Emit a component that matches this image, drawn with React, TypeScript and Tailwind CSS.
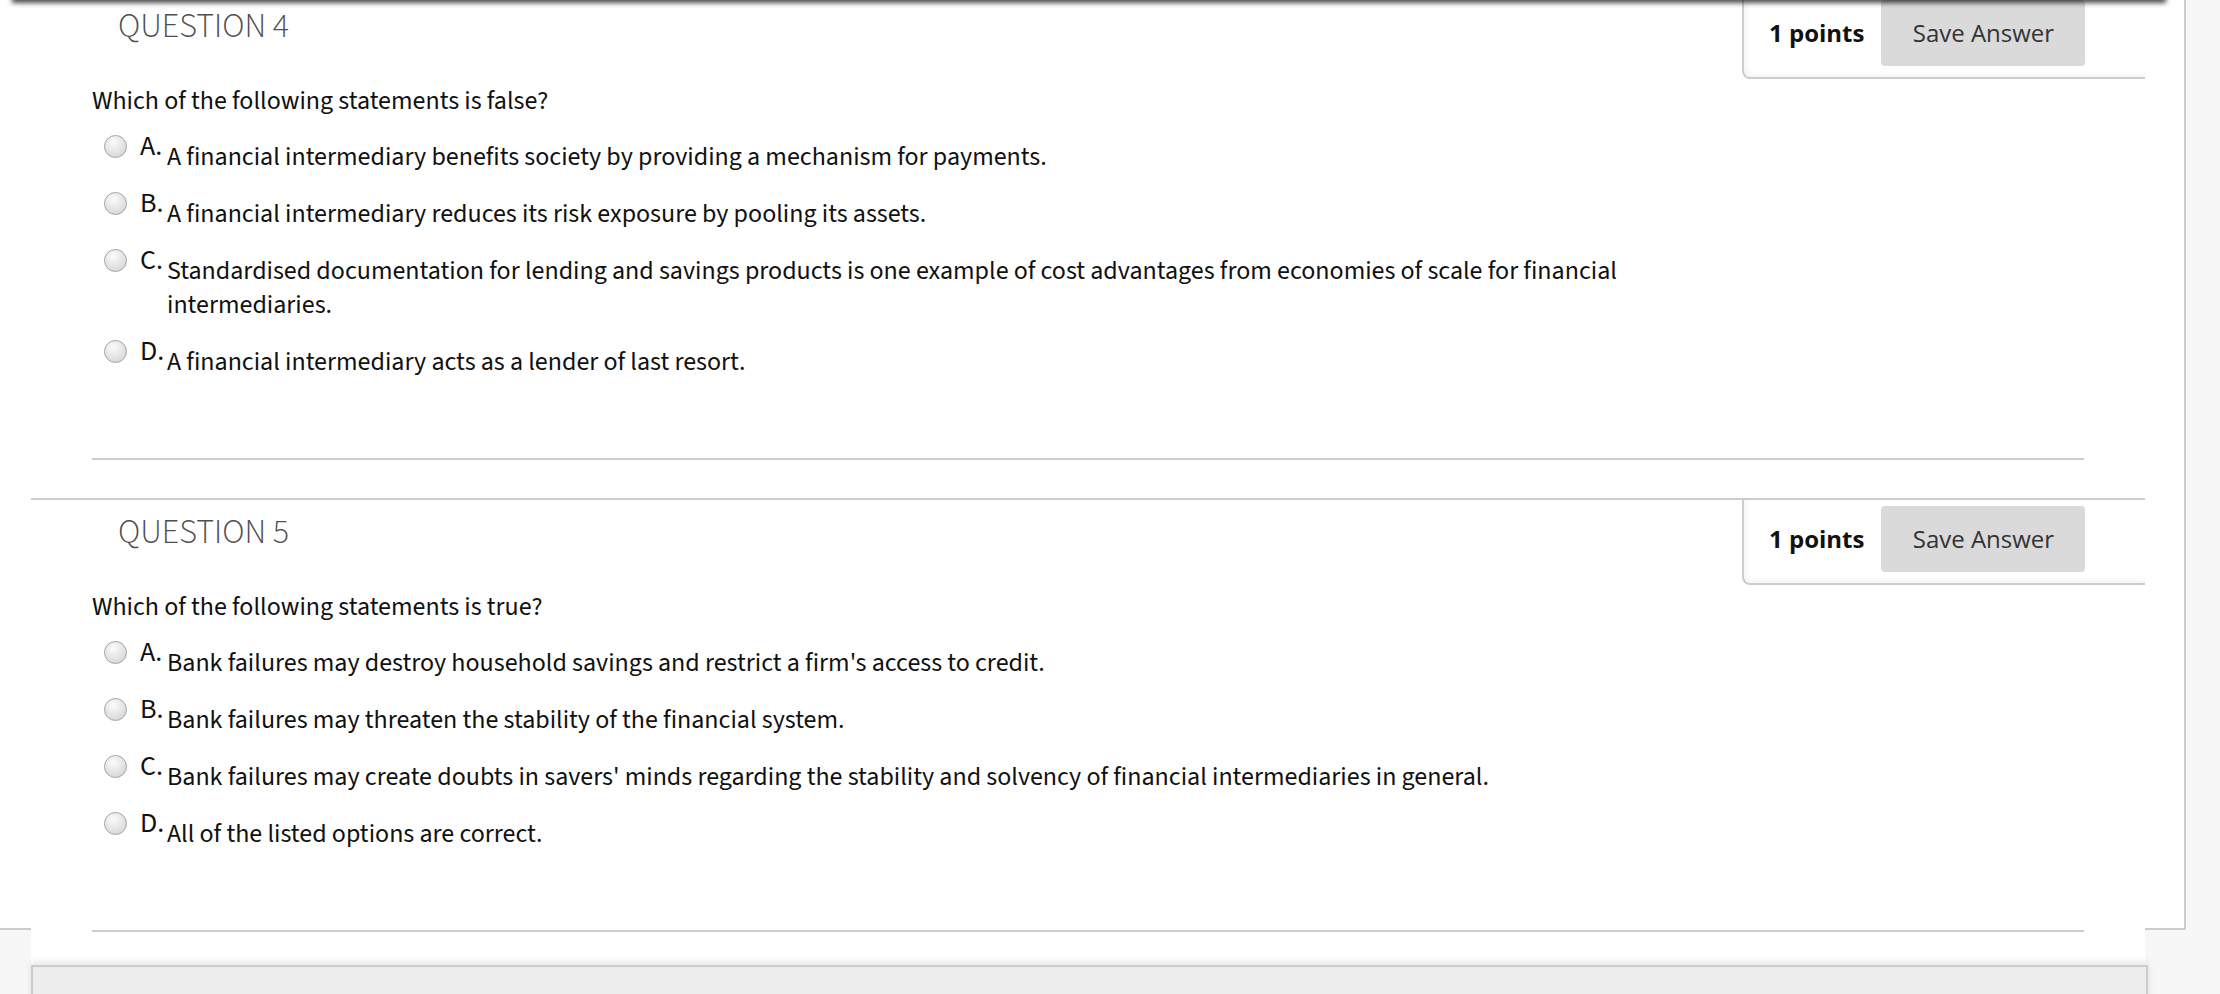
type Question = {
  number: number;
  prompt: string;
  options: { label: string; text: string }[];
};

const questions: Question[] = [
  {
    number: 4,
    prompt: "Which of the following statements is false?",
    options: [
      { label: "A.", text: "A financial intermediary benefits society by providing a mechanism for payments." },
      { label: "B.", text: "A financial intermediary reduces its risk exposure by pooling its assets." },
      {
        label: "C.",
        text: "Standardised documentation for lending and savings products is one example of cost advantages from economies of scale for financial intermediaries.",
      },
      { label: "D.", text: "A financial intermediary acts as a lender of last resort." },
    ],
  },
  {
    number: 5,
    prompt: "Which of the following statements is true?",
    options: [
      { label: "A.", text: "Bank failures may destroy household savings and restrict a firm's access to credit." },
      { label: "B.", text: "Bank failures may threaten the stability of the financial system." },
      {
        label: "C.",
        text: "Bank failures may create doubts in savers' minds regarding the stability and solvency of financial intermediaries in general.",
      },
      { label: "D.", text: "All of the listed options are correct." },
    ],
  },
];

function Radio() {
  return (
    <span className="block h-[23px] w-[23px] shrink-0 rounded-full border border-[#a3a3a3] bg-[radial-gradient(circle_at_40%_30%,#fbfbfb,#dcdcdc_70%,#cfcfcf)]" />
  );
}

function QuestionItem({ q }: { q: Question }) {
  return (
    <li className="border-t-2 border-[#cccccc] pb-[38px]">
      <div className="flex items-start justify-between">
        <h3 className="pl-[87px] pt-[16px] font-['Source_Sans_3',sans-serif] text-[34px] font-light leading-none text-[#4f4f4f]">
          QUESTION {q.number}
        </h3>
        <div className="flex h-[85px] w-[403px] items-start rounded-bl-[8px] border-b-2 border-l-2 border-[#cccccc] pl-[25px] shadow-[inset_3px_-3px_5px_rgba(0,0,0,0.04)]">
          <div className="mt-[6px] flex h-[66px] items-center gap-[17px]">
            <span className="font-['Open_Sans',sans-serif] text-[24px] font-bold text-[#111111]">1 points</span>
            <button
              type="button"
              className="h-[66px] w-[204px] rounded-[4px] bg-[#dadada] font-['Open_Sans',sans-serif] text-[24px] text-[#333333]"
            >
              Save Answer
            </button>
          </div>
        </div>
      </div>

      <p className="ml-[61px] mt-[5px] font-['Source_Sans_3',sans-serif] text-[26px] leading-[34px] text-[#111111]">
        {q.prompt}
      </p>

      <ul className="ml-[73px] mt-[17px] flex flex-col gap-[18px]">
        {q.options.map((o) => (
          <li key={o.label} className="flex items-start">
            <Radio />
            <span className="ml-[13px] w-[27px] shrink-0 whitespace-nowrap font-['Source_Sans_3',sans-serif] text-[28px] leading-[22px] text-[#111111]">
              {o.label}
            </span>
            <span className="mt-[5px] w-[1530px] font-['Source_Sans_3',sans-serif] text-[26px] leading-[34px] text-[#111111]">
              {o.text}
            </span>
          </li>
        ))}
      </ul>

      <div className="ml-[61px] mt-[79px] h-[2px] w-[1992px] bg-[#cccccc]" />
    </li>
  );
}

export default function App() {
  return (
    <div className="relative h-[994px] w-full overflow-hidden bg-[#f7f7f7]">
      <div className="h-[938px] w-[2186px] border-b-2 border-r-2 border-[#cccccc] bg-white">
        <ul className="ml-[31px] mt-[-8px] w-[2114px] bg-white">
          {questions.map((q) => (
            <QuestionItem key={q.number} q={q} />
          ))}
        </ul>
      </div>

      <div className="relative ml-[31px] mt-[35px] h-[40px] w-[2117px] border-l-2 border-r-2 border-t-2 border-[#cccccc] bg-[#ededed] shadow-[0_-3px_7px_rgba(0,0,0,0.1)]" />

      {/* shadow from the fixed bar above */}
      <div className="absolute left-[14px] top-[-10px] h-[10px] w-[2150px] bg-[#555555] shadow-[0_1px_5px_2px_rgba(0,0,0,0.7)]" />
    </div>
  );
}
